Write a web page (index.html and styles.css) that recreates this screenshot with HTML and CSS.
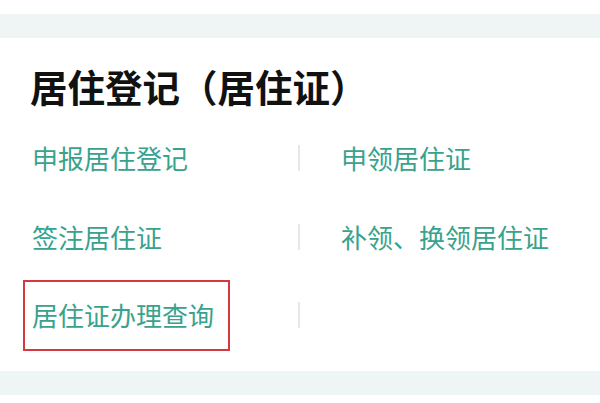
FILE: index.html
```html
<!DOCTYPE html>
<html lang="zh">
<head>
<meta charset="utf-8">
<link rel="stylesheet" href="styles.css">
</head>
<body>
<div class="page">
  <div class="band"></div>
  <section class="card">
    <h1 class="title">居住登记（居住证）</h1>
    <div class="list">
      <div class="row">
        <div class="cell"><a class="link">申报居住登记</a></div>
        <div class="divider"></div>
        <div class="cell cell-right"><a class="link">申领居住证</a></div>
      </div>
      <div class="row">
        <div class="cell"><a class="link">签注居住证</a></div>
        <div class="divider"></div>
        <div class="cell cell-right"><a class="link">补领、换领居住证</a></div>
      </div>
      <div class="row">
        <div class="cell"><a class="link link-marked">居住证办理查询</a></div>
        <div class="divider"></div>
        <div class="cell cell-right"></div>
      </div>
    </div>
  </section>
  <div class="band"></div>
</div>
</body>
</html>
```

FILE: styles.css
```css
* { box-sizing: border-box; }
html, body {
  margin: 0;
  padding: 0;
  background: #ffffff;
}
body {
  font-family: "Noto Sans CJK SC", "Noto Sans", sans-serif;
}
.page {
  padding-top: 14px;
}
.band {
  height: 24px;
  background: #eff4f5;
}
.card {
  padding: 24px 0 16px 0;
}
.title {
  margin: 0 0 0 30px;
  font-size: 37.5px;
  line-height: 48px;
  font-weight: 700;
  color: #111111;
}
.list {
  padding-left: 23px;
  margin-top: 9px;
}
.row {
  display: flex;
  align-items: center;
  height: 78.5px;
}
.cell {
  width: 275px;
  display: flex;
  align-items: center;
  height: 100%;
}
.cell-right {
  flex: 1;
  width: auto;
  padding-left: 32px;
}
.divider {
  width: 2px;
  height: 26px;
  background: #e6e8e8;
}
.link {
  display: inline-block;
  padding-left: 9px;
  font-size: 26px;
  line-height: 36px;
  color: #38a28d;
  text-decoration: none;
}
.link-marked {
  display: flex;
  align-items: center;
  height: 71px;
  padding: 0 14px 0 7px;
  border: 2px solid #d23a3f;
}
```
